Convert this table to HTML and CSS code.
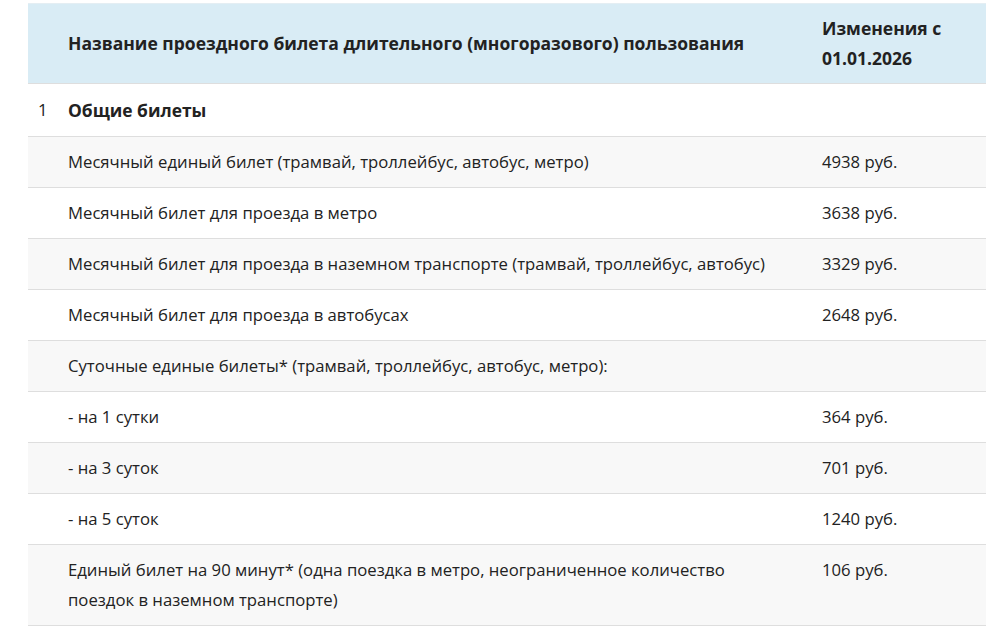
FILE: index.html
```html
<!DOCTYPE html>
<html lang="ru">
<head>
<meta charset="utf-8">
<link rel="stylesheet" href="styles.css">
</head>
<body>
<div class="wrap">
<table class="fares">
<colgroup><col class="c-num"><col class="c-name"><col class="c-price"></colgroup>
<thead>
<tr><th></th><th>Название проездного билета длительного (многоразового) пользования</th><th>Изменения с 01.01.2026</th></tr>
</thead>
<tbody>
<tr class="group"><td class="num">1</td><td class="strong">Общие билеты</td><td></td></tr>
<tr><td></td><td>Месячный единый билет (трамвай, троллейбус, автобус, метро)</td><td>4938 руб.</td></tr>
<tr><td></td><td>Месячный билет для проезда в метро</td><td>3638 руб.</td></tr>
<tr><td></td><td>Месячный билет для проезда в наземном транспорте (трамвай, троллейбус, автобус)</td><td>3329 руб.</td></tr>
<tr><td></td><td>Месячный билет для проезда в автобусах</td><td>2648 руб.</td></tr>
<tr><td></td><td>Суточные единые билеты* (трамвай, троллейбус, автобус, метро):</td><td></td></tr>
<tr><td></td><td>- на 1 сутки</td><td>364 руб.</td></tr>
<tr><td></td><td>- на 3 суток</td><td>701 руб.</td></tr>
<tr><td></td><td>- на 5 суток</td><td>1240 руб.</td></tr>
<tr><td></td><td>Единый билет на 90 минут* (одна поездка в метро, неограниченное количество поездок в наземном транспорте)</td><td>106 руб.</td></tr>
</tbody>
</table>
</div>
</body>
</html>
```
FILE: styles.css
```css
html, body { margin: 0; padding: 0; background: #fff; }
body { font-family: "Open Sans", "Noto Sans", sans-serif; color: #222; font-size: 16.7px; overflow: hidden; }
.wrap { padding: 3px 0 0 28px; }
.fares { border-collapse: collapse; table-layout: fixed; width: 958px; }
.c-num { width: 30px; }
.c-price { width: 174px; }
.fares th, .fares td { padding: 10px 10px; line-height: 30px; text-align: left; vertical-align: top; border-bottom: 1px solid #dedede; }
.fares th { background: #d9ecf5; font-weight: 700; font-size: 17.5px; vertical-align: middle; border-top: 1px solid #e4eef3; padding-top: 9px; padding-bottom: 10px; }
.fares td:nth-child(2) { padding-right: 40px; }
.fares tbody tr:nth-child(even) td { background: #f8f8f8; }
.fares tr.group td { padding-top: 11px; padding-bottom: 11px; }
.fares td.num { padding-left: 10px; padding-right: 0; color: #222; font-weight: 400; }
.fares td.strong { font-weight: 700; font-size: 17.4px; }
```
